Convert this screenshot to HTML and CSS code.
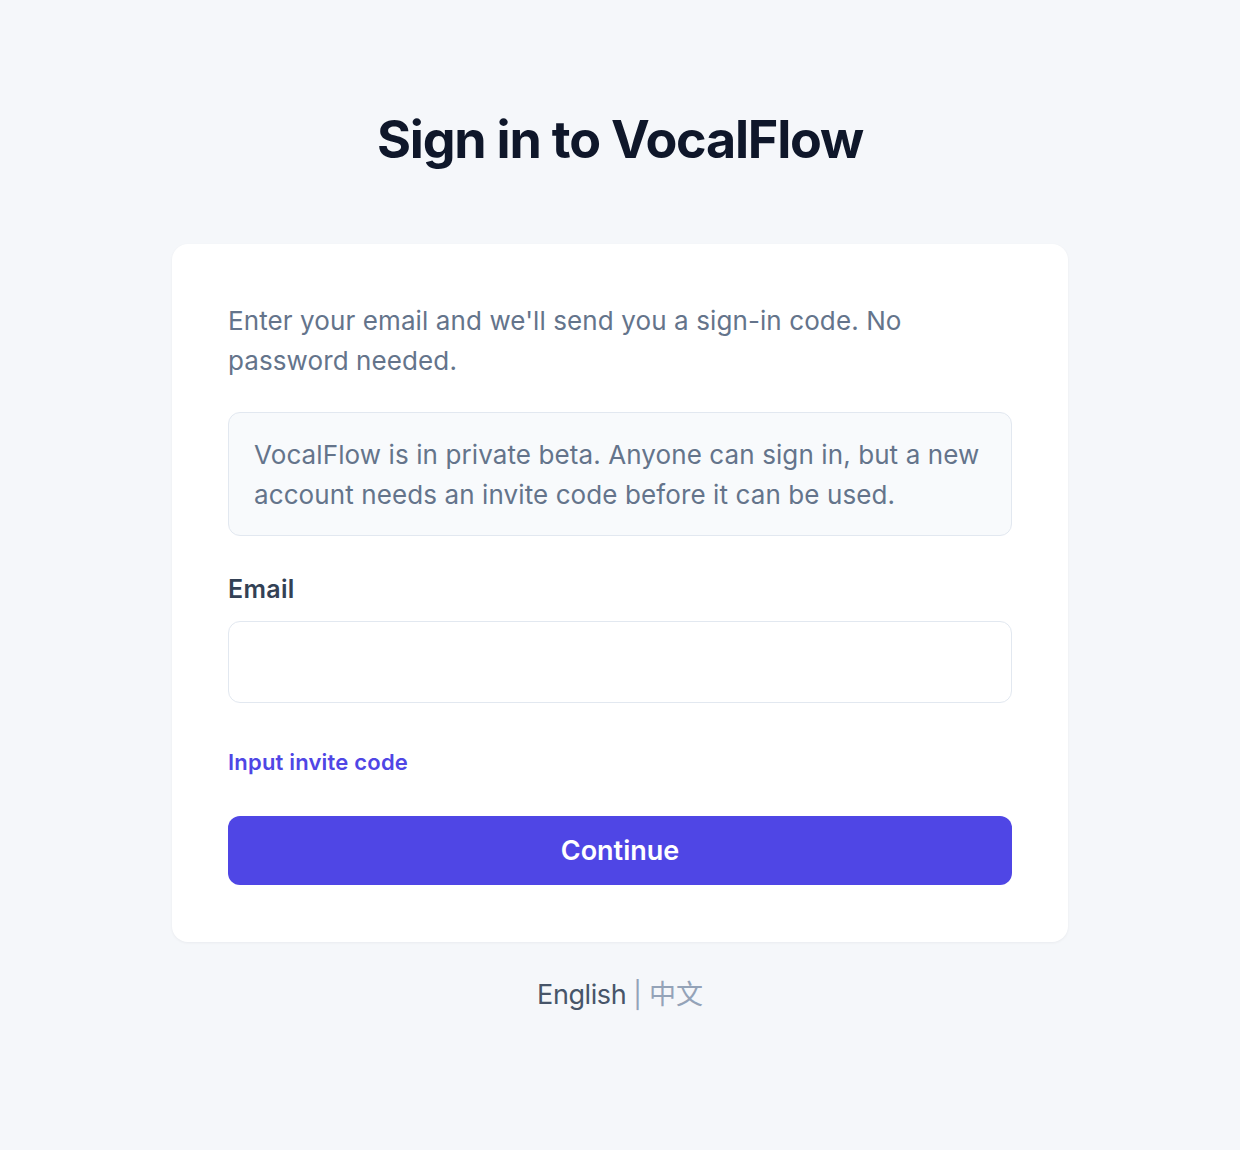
FILE: index.html
```html
<!DOCTYPE html>
<html lang="en">
<head>
<meta charset="utf-8">
<title>Sign in to VocalFlow</title>
<link rel="stylesheet" href="styles.css">
</head>
<body>
<main class="page">
  <h1 class="title">Sign in to VocalFlow</h1>
  <section class="card">
    <p class="intro">Enter your email and we'll send you a sign-in code. No password needed.</p>
    <div class="notice">VocalFlow is in private beta. Anyone can sign in, but a new account needs an invite code before it can be used.</div>
    <label class="label" for="email">Email</label>
    <input class="input" id="email" type="email">
    <a class="link" href="#">Input invite code</a>
    <button class="btn" type="button">Continue</button>
  </section>
  <div class="lang">
    <span class="lang-active">English</span>
    <span class="lang-sep">|</span>
    <span class="lang-other">中文</span>
  </div>
</main>
</body>
</html>
```
FILE: styles.css
```css
* { box-sizing: border-box; }
html, body { margin: 0; padding: 0; }
body {
  background: #f5f7fa;
  font-family: Inter, "Noto Sans CJK SC", sans-serif;
  color: #0f172a;
  min-height: 1150px;
}
.page {
  width: 896px;
  margin: 0 auto;
  padding-top: 108px;
  display: flex;
  flex-direction: column;
  align-items: stretch;
}
.title {
  margin: 0;
  text-align: center;
  font-size: 52px;
  line-height: 64px;
  font-weight: 700;
  letter-spacing: -1.2px;
  color: #0f172a;
}
.card {
  margin-top: 72px;
  background: #ffffff;
  border-radius: 16px;
  box-shadow: 0 1px 3px rgba(15, 23, 42, 0.05);
  padding: 57px 56px 57px;
  display: flex;
  flex-direction: column;
}
.intro {
  margin: 0;
  font-size: 26px;
  line-height: 40px;
  color: #64748b;
  letter-spacing: 0.1px;
}
.notice {
  margin-top: 31px;
  background: #f8fafc;
  border: 1.5px solid #e2e8f0;
  border-radius: 12px;
  padding: 22px 25px 20px;
  font-size: 26px;
  line-height: 40px;
  color: #64748b;
  letter-spacing: 0.1px;
}
.label {
  margin-top: 37px;
  font-size: 25px;
  line-height: 32px;
  font-weight: 600;
  color: #334155;
  letter-spacing: 0.3px;
}
.input {
  margin-top: 16px;
  height: 82px;
  border: 1.5px solid #e2e8f0;
  border-radius: 12px;
  background: #fff;
  font: inherit;
  font-size: 24px;
  padding: 0 24px;
  outline: none;
}
.link {
  margin-top: 43px;
  align-self: flex-start;
  font-size: 22px;
  line-height: 32px;
  font-weight: 600;
  color: #4f46e5;
  text-decoration: none;
  letter-spacing: 0.2px;
}
.btn {
  margin-top: 38px;
  height: 69px;
  border: none;
  border-radius: 12px;
  background: #4f46e5;
  color: #ffffff;
  font-family: inherit;
  font-size: 27px;
  font-weight: 600;
  letter-spacing: 0;
  cursor: pointer;
}
.lang {
  margin-top: 35px;
  display: flex;
  justify-content: center;
  align-items: center;
  gap: 7px;
  font-size: 27px;
  line-height: 36px;
}
.lang-active { color: #475569; letter-spacing: -0.4px; }
.lang-sep { color: #94a3b8; font-size: 26px; }
.lang-other { color: #94a3b8; }
```
